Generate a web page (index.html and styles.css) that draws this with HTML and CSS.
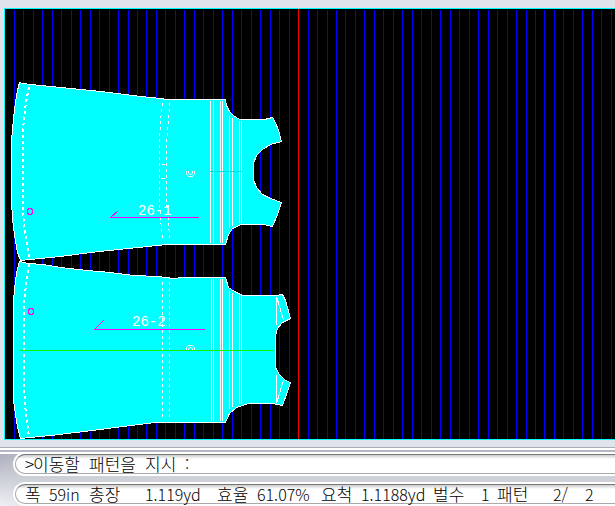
FILE: index.html
```html
<!DOCTYPE html>
<html lang="ko">
<head>
<meta charset="utf-8">
<title>마커</title>
<link rel="stylesheet" href="styles.css">
</head>
<body>
<main class="marker">
<svg class="canvas" viewBox="5 9 610 430" preserveAspectRatio="xMinYMin slice" shape-rendering="crispEdges" role="img" aria-label="26-1, 26-2">
  <g id="lines" class="grid-lines"></g>
  <path class="limit" d="M298.500 9V439"/>
  <!-- piece 26-1 -->
  <path class="piece" d="M19.500 82.500L22.500 83.500L30.500 84.500L61.500 87.500L100.500 91.500L140.500 96.500L160.500 98.500L166.500 99.500H225.500L226.500 105.500L229.500 111.500L233.500 115.500L239.500 119.500H264.500L272.500 117.500L275.500 122.500L278.500 130.500L281.500 141.500L270.500 144.500L262.500 149.500L256.500 155.500L253.500 163.500V179.500L256.500 187.500L262.500 194.500L270.500 198.500L281.500 202.500L277.500 214.500L272.500 226.500L263.500 224.500H241.500L232.500 228.500L228.500 234.500L225.500 244.500H166.500L147.500 246.500L118.500 249.500L90.500 252.500L60.500 256.500L20.500 260.500L17.500 252.500L14.500 234.500L12.500 218.500L11.500 200.500V140.500L13.500 118.500L15.500 102.500L17.500 90.500Z"/>
  <path class="hem" d="M29 87L26 102L24 118L23 130V214L25 232L28 250L29 258"/>
  <path class="fine" d="M210.500 101V243M213.500 101V243M220.500 101V243M222.500 101V243M229.500 116V228M232.500 118V226M239.500 121V223M241.500 121V223M162 164.500H165M161 178.500H165"/>
  <path class="dash" d="M162.500 103L160.500 121L159.500 142V203L160.500 219L162.500 240M169.500 103L168.500 121L166.500 142V203L168.500 219L169.500 240"/>
  <path class="axis" d="M210 171.500H242"/>
  <path class="mark" d="M186.500 171V174L188.500 176.500H192.500L194.500 174V171M188.500 171V173L190 174.500H191L192.500 173V171"/>
  <path class="grain" d="M110 217.500H199M110.500 217.500L118 211"/>
  <path class="grain" d="M29 208.500H31L32.500 210V213L31 214.500H29L27.500 213V210Z"/>
  <text class="name" x="138" y="215">26-1</text>
  <!-- piece 26-2 -->
  <path class="piece" d="M19.500 261.500L28.500 263.500L42.500 264.500L60.500 267.500L87.500 270.500L110.500 272.500L133.500 275.500L157.500 276.500L173.500 278.500L182.500 277.500H225.500L228.500 287.500L234.500 291.500L242.500 295.500H275.500L282.500 294.500L285.500 300.500L290.500 318.500L282.500 322.500L277.500 328.500L275.500 335.500V367.500L279.500 374.500L285.500 380.500L290.500 382.500L287.500 391.500L282.500 405.500L272.500 403.500H248.500L236.500 407.500L229.500 413.500L225.500 422.500H155.500L130.500 425.500L92.500 430.500L50.500 435.500L20.500 438.500L17.500 427.500L14.500 407.500L13.500 400.500V300.500L15.500 280.500L17.500 268.500Z"/>
  <path class="hem" d="M29 264L26 285L24 302V390L26 415L29 437"/>
  <path class="fine" d="M211.500 279V421M213.500 279V421M220.500 279V421M222.500 279V421M229.500 291V409M232.500 293V407M239.500 296V404M241.500 296V404M276.500 297V325M276.500 375V403M277 298L283.500 320M283.500 380L277 402"/>
  <path class="dash" d="M162.500 282V420M169.500 282V420"/>
  <path class="grain" d="M94 329.500H205M94.500 329.500L104 320"/>
  <path class="grain" d="M30 308.500H32L33.500 310V313L32 314.500H30L28.500 313V310Z"/>
  <path class="fold" d="M19 350.500H274"/>
  <path class="mark" d="M186.500 350V348L188.500 345.500H192.500L194.500 348V350M188.500 350V349L190 347.500H191L192.500 349V350"/>
  <text class="name" x="132" y="326">26-2</text>
</svg>
</main>
<footer class="panel">
  <div class="bar prompt"><span>&gt;</span><span>이동할</span><span>패턴을</span><span>지시</span><span>:</span></div>
  <div class="bar status">
    <span>폭</span><span class="num">59in</span><span>총장</span><span class="num">1.119yd</span><span>효율</span><span class="num">61.07%</span><span>요척</span><span class="num">1.1188yd</span><span>벌수</span><span class="num">1</span><span>패턴</span><span class="num">2/</span><span class="num">2</span>
  </div>
</footer>
<script src="grid.js"></script>
</body>
</html>
```
FILE: grid.js
```js
// Vertical ruling of the marker table, one line per unit of length.
const pitch = 9.476;
const rules = [];
for (let n = 0; n < 220; n++) {
  rules.push(`M${Math.floor(14.3 + n * pitch) + 0.5} 10V439`);
}
document.getElementById("lines").innerHTML = `<path d="${rules.join("")}"/>`;
```
FILE: styles.css
```css
* { box-sizing: border-box; }
body {
  margin: 0;
  min-height: 100vh;
  display: flex;
  flex-direction: column;
  background: #dfe3ec;
  overflow: hidden;
}
.marker {
  flex: 1;
  min-height: 0;
  margin: 8px 0 7px 4px;
  border: 1px solid #0ff;
  border-right: 0;
  background: #000;
  display: flex;
}
.canvas { flex: 1; min-width: 0; height: calc(100vh - 76px); fill: none; }
.grid-lines { stroke: #00f; }
.limit { stroke: #f00; }
.piece { fill: #0ff; stroke: #fff; }
.hem { stroke: #fff; stroke-width: 2; stroke-dasharray: 3 3; }
.fine, .mark { stroke: #fff; }
.mark { shape-rendering: auto; }
.dash { stroke: #fff; stroke-dasharray: 3 3; }
.axis { stroke: #00e0e0; }
.grain { stroke: #f0f; }
.fold { stroke: #0f0; }
.name { fill: #fff; font: 14px "Liberation Mono", monospace; }
.panel {
  padding: 6px 0 2px 15px;
  border-top: 1px solid #a9adb8;
  background:
    linear-gradient(#fff 0 2px, #b4b8c4 2px 4px, #fff 4px 6px, #fff0 6px),
    linear-gradient(90deg, #cfd1d900, #cfd1d9 80px),
    linear-gradient(#a4a8b6, #f0f1f5);
  display: flex;
  flex-direction: column;
  gap: 10px;
  font: 300 17px/18px "Noto Sans CJK KR", sans-serif;
  color: #000;
}
.bar {
  height: 20px;
  display: grid;
  border: 1px solid #aaa;
  border-top-color: #777;
  border-right: 0;
  border-radius: 10px 0 0 10px;
  background: linear-gradient(#ccc, #fff 4px);
  box-shadow: 0 0 0 2px #fff;
  padding-left: 9px;
  white-space: pre;
}
.num { font-size: 16px; }
.prompt { grid-template-columns: 8px 56px 56px 40px 16px; }
.status {
  grid-template-columns: 24px 40px 56px 72px 40px 64px 40px 72px 48px 16px 56px 32px 16px;
}
```
